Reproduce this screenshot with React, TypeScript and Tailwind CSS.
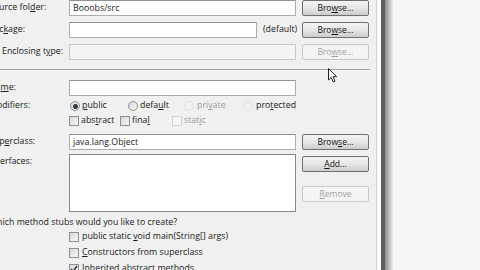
import type { ReactNode } from 'react'

const font = { fontFamily: '"Open Sans", "Noto Sans", sans-serif' }

function U({ children }: { children: ReactNode }) {
  return <span className="underline underline-offset-[1px]">{children}</span>
}

function Field({ value, w = 'w-[227px]', disabled = false }: { value?: string, w?: string, disabled?: boolean }) {
  return (
    <div
      className={`${w} h-[16px] shrink-0 border flex items-center pl-[3px] text-[8.8px] leading-none text-[#1a1a1a] ${
        disabled ? 'bg-[#f4f4f4] border-[#c5c8cb]' : 'bg-white border-[#abadb3] border-t-[#8e9297]'
      }`}
    >
      {value}
    </div>
  )
}

function Button({ children, disabled = false }: { children: ReactNode, disabled?: boolean }) {
  return (
    <div
      className={`w-[67px] h-[16px] shrink-0 rounded-[2px] border flex items-center justify-center text-[8.5px] leading-none ${
        disabled
          ? 'border-[#c8c8c8] bg-[#f4f4f4] text-[#a3a3a3]'
          : 'border-[#707070] bg-gradient-to-b from-[#f4f4f4] via-[#e6e6e6] to-[#cdcdcd] text-[#111]'
      }`}
    >
      {children}
    </div>
  )
}

function Radio({ checked = false, disabled = false }: { checked?: boolean, disabled?: boolean }) {
  return (
    <div
      className={`w-[10px] h-[10px] shrink-0 rounded-full border flex items-center justify-center ${
        disabled ? 'border-[#dedede] bg-[#f2f2f2]' : 'border-[#8f8f8f] bg-gradient-to-br from-[#d6d6d6] to-[#fafafa]'
      }`}
    >
      {checked && <div className="w-[5px] h-[5px] rounded-full bg-[#2e3a46]" />}
    </div>
  )
}

function Check({ checked = false, disabled = false }: { checked?: boolean, disabled?: boolean }) {
  return (
    <div
      className={`w-[10px] h-[10px] shrink-0 border flex items-center justify-center ${
        disabled ? 'border-[#d2d2d2] bg-[#f6f6f6]' : 'border-[#8f8f8f] bg-gradient-to-br from-[#d8d8d8] to-[#f6f6f6]'
      }`}
    >
      {checked && (
        <svg width="8" height="8" viewBox="0 0 8 8">
          <path d="M1 4 L3 6.5 L7 1" stroke="#2b3440" strokeWidth="1.5" fill="none" />
        </svg>
      )}
    </div>
  )
}

function Row({ label, children, button }: { label?: ReactNode, children?: ReactNode, button?: ReactNode }) {
  return (
    <div className="flex items-center h-[16px]">
      <div className="w-[80px] shrink-0 whitespace-nowrap">{label}</div>
      <div className="w-[227px] shrink-0 flex items-center">{children}</div>
      <div className="w-[6px] shrink-0" />
      {button}
    </div>
  )
}

export default function App() {
  return (
    <div className="w-[480px] h-[270px] overflow-hidden flex bg-[#f5f5f5] relative text-[8.8px] text-[#1a1a1a]" style={font}>
      <div className="w-[376px] shrink-0 h-full bg-[#f0f0f0] overflow-hidden">
        <div className="ml-[-11px] flex flex-col">
          <div className="flex flex-col gap-[6px]">
            <Row label={<span>Source fol<U>d</U>er:</span>} button={<Button>Bro<U>w</U>se...</Button>}>
              <Field value="Booobs/src" />
            </Row>
            <Row label={<span>Pac<U>k</U>age:</span>} button={<Button>Bro<U>w</U>se...</Button>}>
              <Field value="" w="w-[188px]" />
              <span className="ml-[6px]">(default)</span>
            </Row>
            <Row
              label={
                <span className="flex items-center gap-[5px] ml-[-2px]">
                  <Check />
                  <span>Enclosing t<U>y</U>pe:</span>
                </span>
              }
              button={<Button disabled>Bro<U>w</U>se...</Button>}
            >
              <Field disabled />
            </Row>
          </div>

          <div className="mt-[9px] w-[381px] h-[2px] border-t border-[#a0a0a0] border-b border-b-white" />

          <div className="mt-[9px]">
            <Row label={<span>Na<U>m</U>e:</span>}>
              <Field />
            </Row>
          </div>

          <div className="mt-[3px] flex items-center h-[14px]">
            <div className="w-[80px] shrink-0">Modifiers:</div>
            <div className="flex items-center">
              <div className="w-[58px] flex items-center gap-[2px] ml-[1px]">
                <Radio checked />
                <span><U>p</U>ublic</span>
              </div>
              <div className="w-[56px] flex items-center gap-[2px]">
                <Radio />
                <span>defa<U>u</U>lt</span>
              </div>
              <div className="w-[59px] flex items-center gap-[3px]">
                <Radio disabled />
                <span className="text-[#9a9a9a]">pri<U>v</U>ate</span>
              </div>
              <div className="flex items-center gap-[3px]">
                <Radio disabled />
                <span>pro<U>t</U>ected</span>
              </div>
            </div>
          </div>

          <div className="mt-[1px] flex items-center h-[14px]">
            <div className="w-[80px] shrink-0" />
            <div className="w-[51px] flex items-center gap-[2px]">
              <Check />
              <span>abs<U>t</U>ract</span>
            </div>
            <div className="w-[52px] flex items-center gap-[2px]">
              <Check />
              <span>fina<U>l</U></span>
            </div>
            <div className="flex items-center gap-[2px]">
              <Check disabled />
              <span className="text-[#9a9a9a]">stat<U>i</U>c</span>
            </div>
          </div>

          <div className="mt-[6px]">
            <Row label={<span>Sup<U>e</U>rclass:</span>} button={<Button>Brow<U>s</U>e...</Button>}>
              <Field value="java.lang.Object" />
            </Row>
          </div>

          <div className="mt-[4px] flex">
            <div className="w-[80px] shrink-0 pt-[1px]">Interfaces:</div>
            <div className="w-[227px] h-[58px] shrink-0 bg-white border border-[#828790]" />
            <div className="w-[6px] shrink-0" />
            <div className="flex flex-col gap-[14px] pt-[2px]">
              <Button><U>A</U>dd...</Button>
              <Button disabled><U>R</U>emove</Button>
            </div>
          </div>

          <div className="mt-[4px] h-[13px] leading-[13px] whitespace-nowrap">Which method stubs would you like to create?</div>

          <div className="flex flex-col">
            {[
              { text: <span>public static <U>v</U>oid main(String[] args)</span>, checked: false },
              { text: <span><U>C</U>onstructors from superclass</span>, checked: false },
              { text: <span><U>I</U>nherited abstract methods</span>, checked: true },
            ].map((item, i) => (
              <div key={i} className="h-[16px] flex items-center">
                <div className="w-[80px] shrink-0" />
                <div className="flex items-center gap-[3px]">
                  <Check checked={item.checked} />
                  {item.text}
                </div>
              </div>
            ))}
          </div>
        </div>
      </div>

      <div className="w-[1px] h-full bg-[#d4d4d4]" />
      <div className="w-[4px] h-full bg-[#fbfbfb]" />
      <div className="w-[4px] h-full bg-[#5e5e5e]" />
      <div className="w-[8px] h-full bg-gradient-to-r from-[#8a8a8a] to-[#efefef]" />
      <div className="flex-1 h-full bg-[#f6f6f6]" />

      <svg className="absolute left-[328px] top-[68px]" width="10" height="16" viewBox="0 0 10 16">
        <path d="M0.5 0.5 L0.5 12 L3.2 9.4 L5.2 14 L7 13.2 L5 8.7 L8.6 8.7 Z" fill="white" stroke="#222" strokeWidth="1" />
      </svg>
    </div>
  )
}
